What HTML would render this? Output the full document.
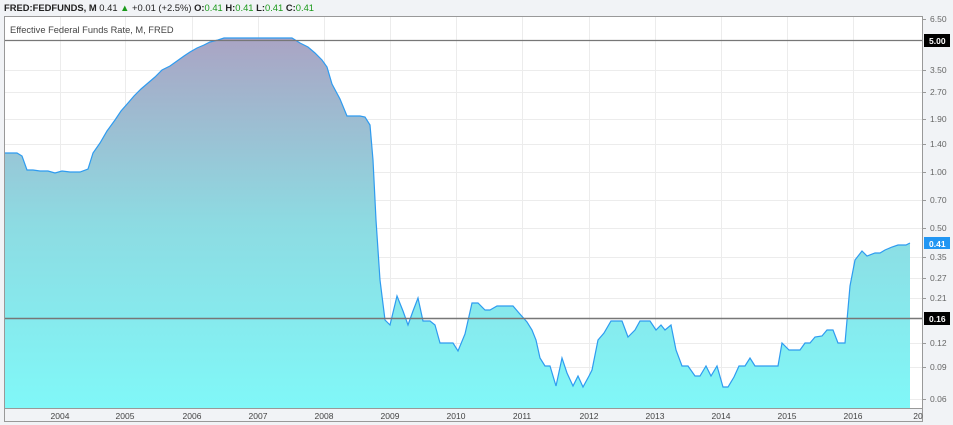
<!DOCTYPE html>
<html><head><meta charset="utf-8"><style>
body{margin:0;width:953px;height:425px;overflow:hidden;background:#f1f3f6;font-family:"Liberation Sans",sans-serif}
</style></head><body>
<svg width="953" height="425" xmlns="http://www.w3.org/2000/svg" style="position:absolute;left:0;top:0">
<defs><linearGradient id="g" x1="0" y1="0" x2="0" y2="1">
<stop offset="0" stop-color="#aaa4c4"/><stop offset="0.5" stop-color="#8ddbe2"/><stop offset="1" stop-color="#80f8f8"/></linearGradient></defs>
<rect x="4" y="16" width="919" height="392" fill="#fff"/>
<g stroke="#ececec" stroke-width="1">
<line x1="4" x2="923" y1="70.5" y2="70.5"/><line x1="4" x2="923" y1="92.5" y2="92.5"/><line x1="4" x2="923" y1="119.5" y2="119.5"/><line x1="4" x2="923" y1="144.5" y2="144.5"/><line x1="4" x2="923" y1="172.5" y2="172.5"/><line x1="4" x2="923" y1="200.5" y2="200.5"/><line x1="4" x2="923" y1="228.5" y2="228.5"/><line x1="4" x2="923" y1="257.5" y2="257.5"/><line x1="4" x2="923" y1="278.5" y2="278.5"/><line x1="4" x2="923" y1="298.5" y2="298.5"/><line x1="4" x2="923" y1="343.5" y2="343.5"/><line x1="4" x2="923" y1="367.5" y2="367.5"/><line x1="4" x2="923" y1="399.5" y2="399.5"/>
<line y1="16" y2="408" x1="60.5" x2="60.5"/><line y1="16" y2="408" x1="125.5" x2="125.5"/><line y1="16" y2="408" x1="192.5" x2="192.5"/><line y1="16" y2="408" x1="258.5" x2="258.5"/><line y1="16" y2="408" x1="324.5" x2="324.5"/><line y1="16" y2="408" x1="390.5" x2="390.5"/><line y1="16" y2="408" x1="456.5" x2="456.5"/><line y1="16" y2="408" x1="522.5" x2="522.5"/><line y1="16" y2="408" x1="589.5" x2="589.5"/><line y1="16" y2="408" x1="655.5" x2="655.5"/><line y1="16" y2="408" x1="721.5" x2="721.5"/><line y1="16" y2="408" x1="787.5" x2="787.5"/><line y1="16" y2="408" x1="853.5" x2="853.5"/>
</g>
<path id="d" d="M5,153 L17,153 22,156 27,170 33,170 40,171 48,171 55,173 62,171 70,172 80,172 88,169 93,153 100,143 107,131 115,120 121,111 128,103 134,96 141,89 148,83 155,77 162,70 170,66 177,61 184,56 190,52 197,48 204,45 210,42 218,40 224,38 292,38 300,43 308,47 315,53 322,60 327,67 332,84 340,99 347,116 360,116 365,117 370,125 373,160 376,220 380,280 385,320 390,325 397,296 403,311 408,325 413,311 418,298 423,321 430,321 435,325 440,343 453,343 458,351 465,334 472,303 478,303 485,310 490,310 497,306 513,306 519,313 527,322 532,330 536,340 540,358 545,366 550,366 556,386 562,358 567,373 573,386 578,376 583,387 589,376 592,370 598,340 604,333 611,321 622,321 628,337 635,330 640,321 650,321 656,330 661,325 665,330 671,325 676,350 682,366 688,366 695,376 700,376 706,366 711,376 717,366 723,387 728,387 734,377 739,366 745,366 750,358 755,366 778,366 782,343 789,350 800,350 805,343 810,343 815,337 822,336 827,330 833,330 838,343 845,343 850,286 855,260 862,251 867,256 875,253 880,253 885,250 892,247 898,245 906,245 910,243" fill="none"/>
<path d="M5,153 L17,153 22,156 27,170 33,170 40,171 48,171 55,173 62,171 70,172 80,172 88,169 93,153 100,143 107,131 115,120 121,111 128,103 134,96 141,89 148,83 155,77 162,70 170,66 177,61 184,56 190,52 197,48 204,45 210,42 218,40 224,38 292,38 300,43 308,47 315,53 322,60 327,67 332,84 340,99 347,116 360,116 365,117 370,125 373,160 376,220 380,280 385,320 390,325 397,296 403,311 408,325 413,311 418,298 423,321 430,321 435,325 440,343 453,343 458,351 465,334 472,303 478,303 485,310 490,310 497,306 513,306 519,313 527,322 532,330 536,340 540,358 545,366 550,366 556,386 562,358 567,373 573,386 578,376 583,387 589,376 592,370 598,340 604,333 611,321 622,321 628,337 635,330 640,321 650,321 656,330 661,325 665,330 671,325 676,350 682,366 688,366 695,376 700,376 706,366 711,376 717,366 723,387 728,387 734,377 739,366 745,366 750,358 755,366 778,366 782,343 789,350 800,350 805,343 810,343 815,337 822,336 827,330 833,330 838,343 845,343 850,286 855,260 862,251 867,256 875,253 880,253 885,250 892,247 898,245 906,245 910,243 L910,408 L5,408 Z" fill="url(#g)"/>
<use href="#d" stroke="#2e9bf0" stroke-width="1.2"/>
<line x1="4" x2="923" y1="40.5" y2="40.5" stroke="#777" stroke-width="1.2"/>
<line x1="4" x2="923" y1="318.5" y2="318.5" stroke="#777" stroke-width="1.5"/>
<rect x="4.5" y="16.5" width="918" height="405" fill="none" stroke="#999"/>
<line x1="4" x2="923" y1="408.5" y2="408.5" stroke="#999"/>
<g stroke="#999"><line x1="923" x2="926" y1="19.5" y2="19.5"/><line x1="923" x2="926" y1="70.5" y2="70.5"/><line x1="923" x2="926" y1="92.5" y2="92.5"/><line x1="923" x2="926" y1="119.5" y2="119.5"/><line x1="923" x2="926" y1="144.5" y2="144.5"/><line x1="923" x2="926" y1="172.5" y2="172.5"/><line x1="923" x2="926" y1="200.5" y2="200.5"/><line x1="923" x2="926" y1="228.5" y2="228.5"/><line x1="923" x2="926" y1="257.5" y2="257.5"/><line x1="923" x2="926" y1="278.5" y2="278.5"/><line x1="923" x2="926" y1="298.5" y2="298.5"/><line x1="923" x2="926" y1="343.5" y2="343.5"/><line x1="923" x2="926" y1="367.5" y2="367.5"/><line x1="923" x2="926" y1="399.5" y2="399.5"/></g>
<text x="10" y="33" font-size="9.3" fill="#444">Effective Federal Funds Rate, M, FRED</text>
<text x="4" y="11" font-size="9.4" fill="#222"><tspan font-weight="bold">FRED:FEDFUNDS, M</tspan> 0.41 <tspan fill="#1a9a1a">▲</tspan> +0.01 (+2.5%) <tspan font-weight="bold">O:</tspan><tspan fill="#1a9a1a">0.41</tspan> <tspan font-weight="bold">H:</tspan><tspan fill="#1a9a1a">0.41</tspan> <tspan font-weight="bold">L:</tspan><tspan fill="#1a9a1a">0.41</tspan> <tspan font-weight="bold">C:</tspan><tspan fill="#1a9a1a">0.41</tspan></text>
<g font-size="8.5" fill="#666">
<text x="930" y="22">6.50</text><text x="930" y="73">3.50</text><text x="930" y="95">2.70</text><text x="930" y="122">1.90</text><text x="930" y="147">1.40</text><text x="930" y="175">1.00</text><text x="930" y="203">0.70</text><text x="930" y="231">0.50</text><text x="930" y="260">0.35</text><text x="930" y="281">0.27</text><text x="930" y="301">0.21</text><text x="930" y="346">0.12</text><text x="930" y="370">0.09</text><text x="930" y="402">0.06</text>
</g>
<rect x="924" y="34" width="26" height="13" fill="#000"/><text x="929" y="44" font-size="8.5" font-weight="bold" fill="#fff">5.00</text>
<rect x="924" y="237" width="26" height="12" fill="#2196f3"/><text x="929" y="247" font-size="8.5" font-weight="bold" fill="#fff">0.41</text>
<rect x="924" y="312" width="26" height="13" fill="#000"/><text x="929" y="322" font-size="8.5" font-weight="bold" fill="#fff">0.16</text>
<g font-size="8.5" fill="#444" text-anchor="middle">
<text x="60" y="419">2004</text><text x="125" y="419">2005</text><text x="192" y="419">2006</text><text x="258" y="419">2007</text><text x="324" y="419">2008</text><text x="390" y="419">2009</text><text x="456" y="419">2010</text><text x="522" y="419">2011</text><text x="589" y="419">2012</text><text x="655" y="419">2013</text><text x="721" y="419">2014</text><text x="787" y="419">2015</text><text x="853" y="419">2016</text><text x="918" y="419">20</text>
</g>
</svg>
</body></html>
